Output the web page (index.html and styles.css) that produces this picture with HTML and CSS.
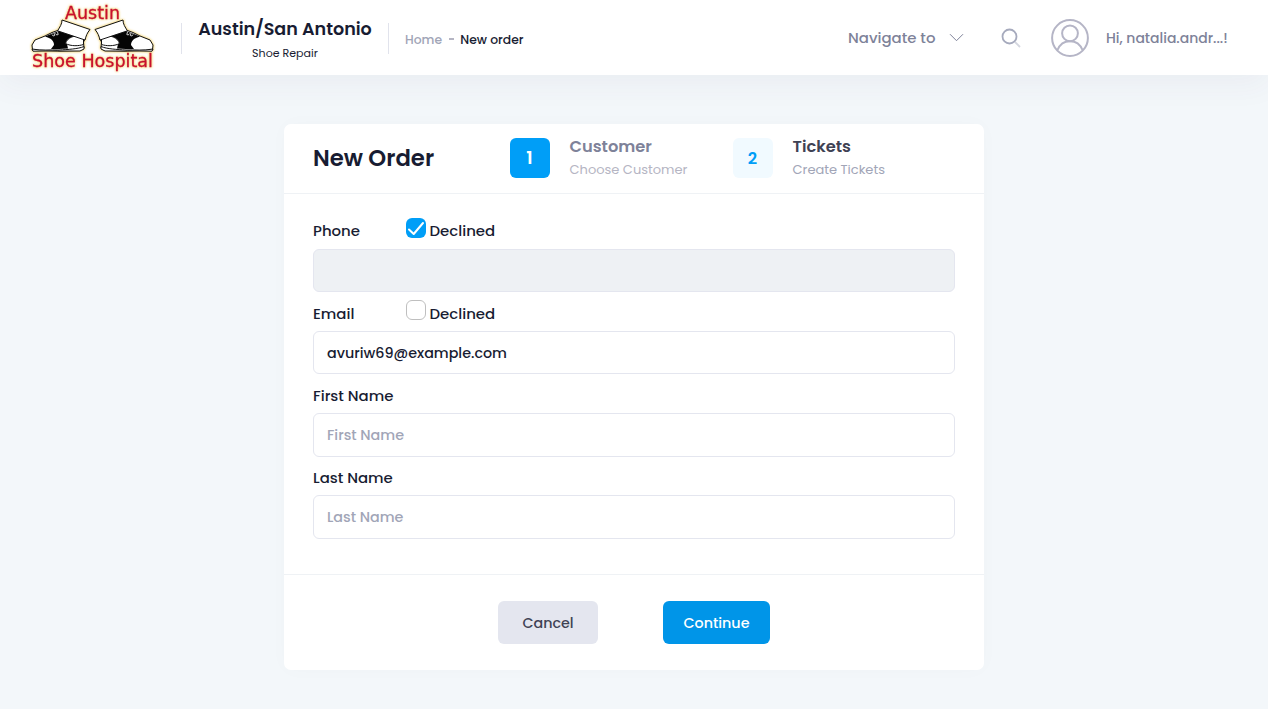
FILE: index.html
```html
<!DOCTYPE html>
<html lang="en">
<head>
<meta charset="utf-8">
<title>New order</title>
<link rel="stylesheet" href="styles.css">
</head>
<body>
<header class="topbar">
  <svg class="logo" viewBox="0 0 130 75" width="130" height="75" role="img" aria-label="Austin Shoe Hospital">
    <g id="left-shoe">
      <path class="white" d="M29 30L22 32.500L15 36L5 40L2 45L2.500 50L28 51L50 50.500L54 48L53.500 42L55 39Z"/>
      <path class="ink" d="M29 31L21 34L15 36.500C21 38 24 41 24 45L21 49H29L38 48.500L37 44Q40 38 49 37.500Z"/>
      <path class="white" d="M53.500 36C45 34.500 37 37.500 35.500 43.500C41 46.500 49 46 53.500 44.500Z"/>
      <path class="white" d="M2 49C12 51 20 49.500 29 50C38 49.500 48 49 54 46.500V49L50 51H30L27.500 50.800L3 51.200Z"/>
      <path class="white" d="M32 20L60 29.500C57 33 56 36 55 40L27.500 30.800C30 27 32 24 32 20Z"/>
      <path class="lace" d="M22 34.500l1.200 1.500 1.500-.5-.7-2.500M25.500 33.500l1.200 1.500 1.500-.5-.7-2.500"/>
    </g>
    <use href="#left-shoe" transform="translate(125 0) scale(-1 1)"/>
    <text class="logo-text" x="35" y="18.500" textLength="55" lengthAdjust="spacingAndGlyphs">Austin</text>
    <text class="logo-text" x="2" y="67" textLength="121" lengthAdjust="spacingAndGlyphs">Shoe Hospital</text>
  </svg>
  <div class="company">
    <div class="company-name">Austin/San Antonio</div>
    <div class="company-kind">Shoe Repair</div>
  </div>
  <nav class="crumbs"><span class="crumb-home">Home</span><span class="crumb-dash"></span><span class="crumb-here">New order</span></nav>
  <div class="tools">
    <span class="navigate">Navigate to</span>
    <svg class="chevron" width="16" height="10" viewBox="0 0 16 10"><path d="M1 1.200L7.500 7.700L14 1.200"/></svg>
    <svg class="search" width="20" height="20" viewBox="0 0 20 20"><path class="handle" d="M14 14L19 19"/><circle cx="8.500" cy="8.500" r="7"/></svg>
    <svg class="avatar" width="38" height="38" viewBox="0 0 38 38"><circle cx="19" cy="19" r="17.900"/><circle cx="19" cy="14.300" r="7.900"/><path d="M6.500 31Q10 22.200 19 22.200T31.500 31"/></svg>
    <span class="user">Hi, natalia.andr...!</span>
  </div>
</header>
<main class="card">
  <div class="card-head">
    <h1 class="title">New Order</h1>
    <div class="step step-one">
      <span class="step-number">1</span>
      <div class="step-body"><div class="step-name">Customer</div><div class="step-note">Choose Customer</div></div>
    </div>
    <div class="step step-two">
      <span class="step-number">2</span>
      <div class="step-body"><div class="step-name">Tickets</div><div class="step-note">Create Tickets</div></div>
    </div>
  </div>
  <form class="form">
    <div class="field">
      <div class="label-row"><span class="label">Phone</span><span class="check checked"><svg width="20" height="20" viewBox="0 0 20 20"><path d="M3 11.500L7.700 16L17 5"/></svg></span><span class="declined">Declined</span></div>
      <div class="input disabled"></div>
    </div>
    <div class="field">
      <div class="label-row"><span class="label">Email</span><span class="check"></span><span class="declined">Declined</span></div>
      <div class="input"><span>avuriw69@example.com</span></div>
    </div>
    <div class="field">
      <div class="label-row"><span>First Name</span></div>
      <div class="input placeholder"><span>First Name</span></div>
    </div>
    <div class="field">
      <div class="label-row"><span>Last Name</span></div>
      <div class="input placeholder"><span>Last Name</span></div>
    </div>
  </form>
  <div class="actions">
    <button class="button cancel" type="button">Cancel</button>
    <button class="button continue" type="button">Continue</button>
  </div>
</main>
</body>
</html>
```
FILE: styles.css
```css
* { box-sizing: border-box; }
body { margin: 0; height: 709px; overflow: hidden; background: #f3f7fa; color: #181c32; font-family: Poppins, Inter, sans-serif; font-weight: 500; }
.topbar { display: flex; height: 75px; background: #fff; padding-left: 30px; box-shadow: 0 10px 30px rgba(82, 63, 105, .05); }
.logo { flex: none; filter: drop-shadow(0 0 1px #f3d67c) drop-shadow(0 0 1px #f8e3a0); }
.logo-text { font: 400 18px "DejaVu Sans", sans-serif; fill: #c8102e; stroke: #c8102e; stroke-width: .3px; }
.ink { fill: #050505; }
.white { fill: #fff; stroke: #111; stroke-width: 1; stroke-linejoin: round; }
.lace { fill: none; stroke: #fff; stroke-width: .8; }
.company { width: 208px; height: 31px; margin: 23px 0 0 21px; border: solid #e1e3ec; border-width: 0 1px; text-align: center; white-space: nowrap; }
.company-name { height: 23px; margin-top: -6px; font-size: 17.550px; line-height: 25px; font-weight: 600; }
.company-kind { font-size: 11.050px; line-height: 26px; font-weight: 400; }
.crumbs { display: flex; align-items: center; height: 80px; margin-left: 16px; font-size: 12.350px; white-space: nowrap; }
.crumb-home { width: 44px; color: #a1a5b7; }
.crumb-dash { width: 5px; height: 2px; margin-bottom: 2px; background: #b5b5c3; }
.crumb-here { margin-left: 6.300px; }
.tools { display: flex; align-items: center; height: 75px; margin-left: auto; padding-right: 40px; color: #7e8299; white-space: nowrap; }
.navigate { width: 88px; font-size: 14.950px; }
.chevron { margin-left: 13px; fill: none; stroke: #7e8299; stroke-width: 1; }
.search { margin: 0 1px 0 36px; fill: none; stroke: #a6aabd; stroke-width: 1.800; }
.handle { stroke: #d4d6df; }
.avatar { margin-left: 29px; fill: none; stroke: #b5b5c6; stroke-width: 2; }
.user { width: 122px; margin-left: 17px; padding-top: 1px; font-size: 13.975px; }
.card { display: flex; flex-direction: column; width: 700px; height: 546px; margin: 49px auto 0; background: #fff; border-radius: 7px; box-shadow: 0 0 20px rgba(76, 87, 125, .02); }
.card-head { display: flex; height: 70px; padding: 14px 29px 0; border-bottom: 1px solid #eff2f5; }
.title { width: 197px; margin: 0; font-size: 22.750px; line-height: 41px; font-weight: 600; }
.step { display: flex; width: 223px; white-space: nowrap; }
.step-two { margin-left: .5px; }
.step-number { display: flex; align-items: center; justify-content: center; width: 40px; height: 40px; border-radius: 6px; background: #009ef7; color: #fff; font-size: 17.550px; font-weight: 600; }
.step-body { margin: -4px 0 0 20px; }
.step-name { height: 24px; font-size: 16.250px; line-height: 25px; font-weight: 600; color: #7e8299; }
.step-note { font-size: 13px; line-height: 23px; font-weight: 400; color: #b5b5c3; }
.step-two .step-number { background: #f1faff; color: #009ef7; font-size: 16.250px; }
.step-two .step-name { color: #3f4254; }
.step-two .step-note { color: #a1a5b7; }
.form { flex: none; height: 380px; padding: 16px 29px 0; }
.field { height: 82.150px; }
.label-row { display: flex; height: 39px; font-size: 14.950px; line-height: 42px; white-space: nowrap; }
.field + .field .label-row { line-height: 43.500px; }
.label { width: 93px; }
.check { width: 20px; height: 20px; margin: 8px 3.500px 0 0; border: 1px solid #bfbfbf; border-radius: 6px; }
.checked { border: 0; background: #009ef7; }
.checked svg { display: block; fill: none; stroke: #fff; stroke-width: 2; stroke-linecap: round; stroke-linejoin: round; }
.input { display: flex; align-items: center; height: 43.350px; padding: 1px 13px 0; border: 1px solid #e4e6ef; border-radius: 6px; font-size: 14.300px; }
.disabled { background: #eef1f4; }
.placeholder { color: #a1a5b7; }
.actions { display: flex; justify-content: center; gap: 65px; height: 96px; padding-top: 26px; border-top: 1px solid #eff2f5; }
.button { height: 43px; padding: 1px 0 0; border: 0; border-radius: 6px; font: inherit; font-size: 14.300px; }
.cancel { width: 100px; background: #e4e6ef; color: #3f4254; }
.continue { width: 107px; background: #0095e8; color: #fff; }
```
